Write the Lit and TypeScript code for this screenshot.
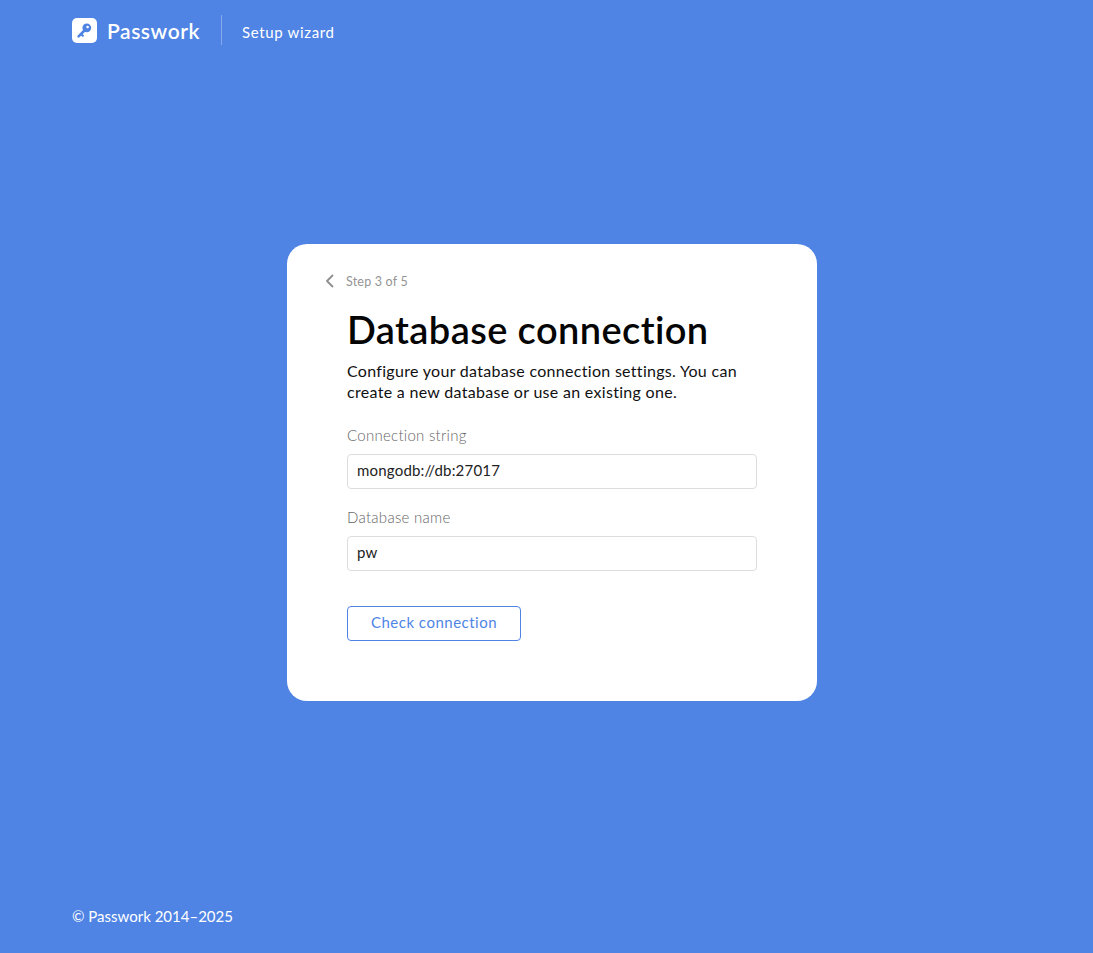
import { LitElement, html, css } from "lit";
import { customElement } from "lit/decorators.js";

@customElement("app-root")
export class AppRoot extends LitElement {
  static styles = css`
    :host {
      display: flex;
      flex-direction: column;
      min-height: 100vh;
      background: #4f84e4;
      font-family: "Lato", "Noto Sans", sans-serif;
      color: #fff;
      box-sizing: border-box;
    }
    .header {
      display: flex;
      align-items: center;
      height: 30px;
      padding: 15px 72px 0;
    }
    .logo { width: 25px; height: 25px; display: block; }
    .brand {
      font-size: 21px;
      font-weight: 600;
      margin-left: 10px;
      letter-spacing: 0.55px;
      width: 94px;
    }
    .divider {
      width: 1px;
      height: 30px;
      background: rgba(255, 255, 255, 0.3);
      margin-left: 20px;
    }
    .sub {
      font-size: 15px;
      margin-left: 20px;
      padding-top: 4px;
      letter-spacing: 0.65px;
    }
    .main {
      height: 457px;
      margin-top: 199px;
      padding-left: 287px;
    }
    .card {
      box-sizing: border-box;
      width: 530px;
      height: 457px;
      background: #fff;
      border-radius: 20px;
      padding: 29px 60px 0;
      color: #000;
    }
    .step {
      display: flex;
      align-items: center;
      height: 16px;
      margin-left: -22px;
      font-size: 12.5px;
      letter-spacing: 0.2px;
      color: #949494;
    }
    .step svg { width: 9px; height: 14px; display: block; margin-right: 12px; }
    h1 {
      margin: 18px 0 0;
      font-size: 38px;
      line-height: 44px;
      font-weight: 600;
      letter-spacing: 0.4px;
      color: #050505;
    }
    p {
      margin: 9px 0 0;
      font-size: 16px;
      line-height: 21px;
      letter-spacing: 0.3px;
      color: #111;
    }
    label {
      display: block;
      font-size: 15px;
      line-height: 20px;
      letter-spacing: 0.27px;
      font-weight: 300;
      color: #666;
    }
    .f1 { margin-top: 23px; }
    .f2 { margin-top: 18px; }
    .input {
      box-sizing: border-box;
      width: 410px;
      height: 35px;
      margin-top: 9px;
      padding: 0 9px 3px;
      display: flex;
      align-items: center;
      border: 1px solid #dddddd;
      border-radius: 4px;
      font-size: 15px;
      letter-spacing: 0.2px;
      color: #222;
    }
    .btn {
      box-sizing: border-box;
      width: 174px;
      height: 35px;
      margin-top: 35px;
      padding-bottom: 3px;
      display: flex;
      align-items: center;
      justify-content: center;
      border: 1px solid #4f84e4;
      border-radius: 4px;
      font-size: 15px;
      letter-spacing: 0.5px;
      color: #4f84e4;
      background: #fff;
    }
    .footer {
      margin-top: 205px;
      padding: 0 72px;
      font-size: 15px;
      line-height: 20px;
    }
  `;

  render() {
    return html`
      <div class="header">
        <svg class="logo" viewBox="0 0 25 25">
          <rect width="25" height="25" rx="5" fill="#fff" />
          <circle cx="14.8" cy="9.8" r="4.4" fill="#4f84e4" />
          <circle cx="15.6" cy="9" r="1.3" fill="#fff" />
          <path d="M13 12 L6.6 18.4" stroke="#4f84e4" stroke-width="2.6" stroke-linecap="round" />
          <path d="M9 16 L10.8 17.8" stroke="#4f84e4" stroke-width="2.2" stroke-linecap="round" />
        </svg>
        <span class="brand">Passwork</span>
        <span class="divider"></span>
        <span class="sub">Setup wizard</span>
      </div>
      <div class="main">
        <div class="card">
          <div class="step">
            <svg viewBox="0 0 9 14">
              <path d="M7.5 1.5 L2 7 L7.5 12.5" fill="none" stroke="#8e8e8e" stroke-width="1.8" stroke-linecap="round" stroke-linejoin="round" />
            </svg>
            <span>Step 3 of 5</span>
          </div>
          <h1>Database connection</h1>
          <p>Configure your database connection settings. You can<br />create a new database or use an existing one.</p>
          <label class="f1">Connection string</label>
          <div class="input">mongodb://db:27017</div>
          <label class="f2">Database name</label>
          <div class="input">pw</div>
          <div class="btn">Check connection</div>
        </div>
      </div>
      <div class="footer">© Passwork 2014–2025</div>
    `;
  }
}
